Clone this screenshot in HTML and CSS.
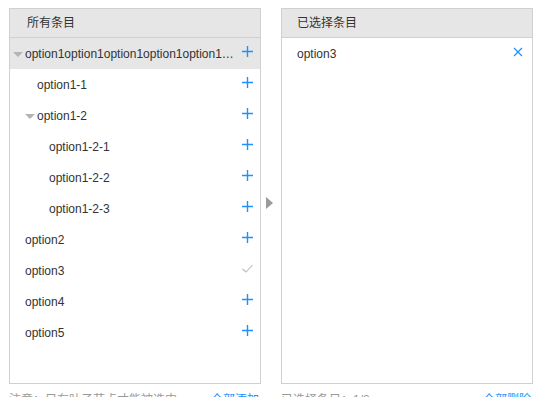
FILE: index.html
```html
<!DOCTYPE html>
<html>
<head>
<meta charset="utf-8">
<link rel="stylesheet" href="styles.css">
</head>
<body>
<div class="transfer">
  <div class="col">
    <div class="panel">
      <div class="panel-head">所有条目</div>
      <div class="panel-body">
        <div class="row active lv0"><span class="caret open"></span><span class="label">option1option1option1option1option1option1option1</span><svg class="act" viewBox="0 0 11 11"><path d="M0 5.5H11M5.5 0V11" stroke="#1e90ff" stroke-width="1.4"/></svg></div>
        <div class="row lv1"><span class="caret"></span><span class="label">option1-1</span><svg class="act" viewBox="0 0 11 11"><path d="M0 5.5H11M5.5 0V11" stroke="#1e90ff" stroke-width="1.4"/></svg></div>
        <div class="row lv1"><span class="caret open"></span><span class="label">option1-2</span><svg class="act" viewBox="0 0 11 11"><path d="M0 5.5H11M5.5 0V11" stroke="#1e90ff" stroke-width="1.4"/></svg></div>
        <div class="row lv2"><span class="caret"></span><span class="label">option1-2-1</span><svg class="act" viewBox="0 0 11 11"><path d="M0 5.5H11M5.5 0V11" stroke="#1e90ff" stroke-width="1.4"/></svg></div>
        <div class="row lv2"><span class="caret"></span><span class="label">option1-2-2</span><svg class="act" viewBox="0 0 11 11"><path d="M0 5.5H11M5.5 0V11" stroke="#1e90ff" stroke-width="1.4"/></svg></div>
        <div class="row lv2"><span class="caret"></span><span class="label">option1-2-3</span><svg class="act" viewBox="0 0 11 11"><path d="M0 5.5H11M5.5 0V11" stroke="#1e90ff" stroke-width="1.4"/></svg></div>
        <div class="row lv0"><span class="caret"></span><span class="label">option2</span><svg class="act" viewBox="0 0 11 11"><path d="M0 5.5H11M5.5 0V11" stroke="#1e90ff" stroke-width="1.4"/></svg></div>
        <div class="row lv0"><span class="caret"></span><span class="label">option3</span><svg class="act" viewBox="0 0 11 11"><path d="M0.5 6L4 9L10.5 2" fill="none" stroke="#bbb" stroke-width="1.1"/></svg></div>
        <div class="row lv0"><span class="caret"></span><span class="label">option4</span><svg class="act" viewBox="0 0 11 11"><path d="M0 5.5H11M5.5 0V11" stroke="#1e90ff" stroke-width="1.4"/></svg></div>
        <div class="row lv0"><span class="caret"></span><span class="label">option5</span><svg class="act" viewBox="0 0 11 11"><path d="M0 5.5H11M5.5 0V11" stroke="#1e90ff" stroke-width="1.4"/></svg></div>
      </div>
    </div>
    <div class="foot"><span class="note">注意：只有叶子节点才能被选中</span><a class="link">全部添加</a></div>
  </div>
  <div class="mid"><span class="arrow"></span></div>
  <div class="col">
    <div class="panel">
      <div class="panel-head right">已选择条目</div>
      <div class="panel-body">
        <div class="row sel"><span class="label">option3</span><svg class="act x" viewBox="0 0 10 10"><path d="M1 1L9 9M9 1L1 9" stroke="#1e90ff" stroke-width="1.2"/></svg></div>
      </div>
    </div>
    <div class="foot right"><span class="note">已选择条目：1/8</span><a class="link">全部删除</a></div>
  </div>
</div>
</body>
</html>
```
FILE: styles.css
```css
* { box-sizing: border-box; }
html, body { margin: 0; padding: 0; background: #fff; }
body {
  font-family: "Liberation Sans", Arial, "Noto Sans CJK SC", sans-serif;
  font-size: 12px;
  color: #333;
  overflow: hidden;
}
.transfer {
  display: flex;
  padding: 8px 0 0 9px;
}
.col { width: 252px; display: flex; flex-direction: column; }
.panel {
  border: 1px solid #d0d0d0;
  height: 376px;
  display: flex;
  flex-direction: column;
}
.panel-head {
  height: 29px;
  line-height: 28px;
  background: #e6e6e6;
  border-bottom: 1px solid #d0d0d0;
  padding-left: 17px;
  font-size: 12px;
  color: #333;
  flex: none;
}
.panel-head.right { padding-left: 15px; }
.panel-body { flex: 1; }
.row {
  height: 31px;
  display: flex;
  align-items: center;
  padding-right: 7px;
}
.row.active { background: #e6e6e6; }
.row.lv0 { padding-left: 2px; }
.row.lv1 { padding-left: 14px; }
.row.lv2 { padding-left: 26px; }
.row.sel { padding-left: 15px; padding-right: 9px; }
.caret { width: 13px; height: 31px; flex: none; position: relative; }
.caret.open::after {
  content: "";
  position: absolute;
  left: 1px;
  top: 14px;
  border-left: 5px solid transparent;
  border-right: 5px solid transparent;
  border-top: 5px solid #b4b4b4;
}
.label {
  flex: 1;
  min-width: 0;
  white-space: nowrap;
  overflow: hidden;
  text-overflow: ellipsis;
  padding-right: 5px;
}
.act { width: 11px; height: 11px; flex: none; display: block; margin-top: -4px; }
.act.x { width: 10px; height: 10px; margin-top: -4px; }
.mid {
  width: 20px;
  display: flex;
  align-items: center;
  justify-content: center;
  height: 376px;
}
.arrow {
  width: 0; height: 0;
  border-top: 6px solid transparent;
  border-bottom: 6px solid transparent;
  border-left: 7px solid #9a9a9a;
  margin-left: -4px;
  margin-top: 14px;
}
.foot {
  display: flex;
  justify-content: space-between;
  margin-top: 6px;
  line-height: 20px;
  font-size: 12px;
}
.note { color: #999; }
.link { color: #1e90ff; padding-right: 2px; }
```
